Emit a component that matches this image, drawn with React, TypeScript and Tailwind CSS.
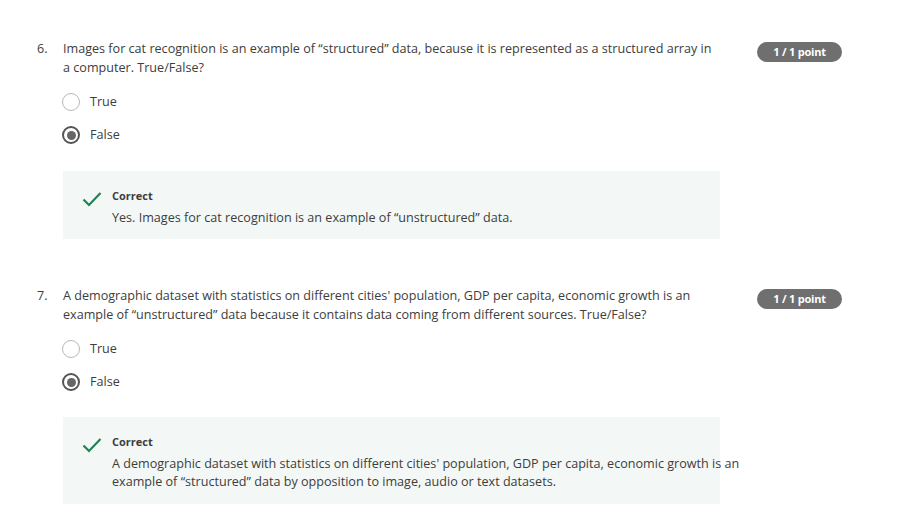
import React from "react";

const font = { fontFamily: '"Open Sans", "Noto Sans", sans-serif' };

function Badge() {
  return (
    <div className="w-[85px] h-[20px] rounded-full bg-[#6f6f6f] text-white text-[11px] font-bold flex items-center justify-center tracking-[-0.2px]">
      1 / 1 point
    </div>
  );
}

function Radio({ label, checked }: { label: string; checked?: boolean }) {
  return (
    <div className="flex items-center h-[20px] pl-[62px]">
      {checked ? (
        <div className="w-[18px] h-[18px] rounded-full border-[2px] border-[#555] flex items-center justify-center">
          <div className="w-[9px] h-[9px] rounded-full bg-[#666]" />
        </div>
      ) : (
        <div className="w-[18px] h-[18px] rounded-full border-[1.5px] border-[#b8b8b8]" />
      )}
      <span className="ml-[10px] text-[12.6px] text-[#3d3d3d]">{label}</span>
    </div>
  );
}

function Check() {
  return (
    <svg width="20" height="16" viewBox="0 0 20 16" className="mt-[1px]">
      <path d="M1.5 8.5 L7 14 L18.5 2" fill="none" stroke="#1f8354" strokeWidth="2.2" />
    </svg>
  );
}

function Feedback({ children, pb }: { children: React.ReactNode; pb: string }) {
  return (
    <div className={`ml-[63px] w-[657px] bg-[#f3f8f6] pt-[17px] ${pb} flex`}>
      <div className="w-[49px] pl-[19px] pt-[2px] shrink-0">
        <Check />
      </div>
      <div className="w-[632px] shrink-0">
        <div className="text-[11px] font-bold text-[#3d3d3d] leading-[16px]">Correct</div>
        <div className="text-[12.6px] text-[#3d3d3d] leading-[18px] mt-[5px]">{children}</div>
      </div>
    </div>
  );
}

function Question({ num, text }: { num: string; text: React.ReactNode }) {
  return (
    <div className="flex">
      <div className="w-[720px] flex pl-[37px] text-[12.6px] leading-[19px] text-[#3d3d3d]">
        <div className="w-[26px] shrink-0">{num}</div>
        <div className="flex-1 pr-[4px]">{text}</div>
      </div>
      <div className="ml-[37px] pt-[3px]">
        <Badge />
      </div>
    </div>
  );
}

export default function App() {
  return (
    <div className="w-[898px] h-[525px] bg-white overflow-hidden pt-[39px]" style={font}>
      <Question
        num="6."
        text={<>Images for cat recognition is an example of “structured” data, because it is represented as a structured array in a computer. True/False?</>}
      />
      <div className="mt-[15px]">
        <Radio label="True" />
      </div>
      <div className="mt-[13px]">
        <Radio label="False" checked />
      </div>
      <div className="mt-[26px]">
        <Feedback pb="pb-[12px]">Yes. Images for cat recognition is an example of “unstructured” data.</Feedback>
      </div>
      <div className="mt-[47px]">
        <Question
          num="7."
          text={<>A demographic dataset with statistics on different cities' population, GDP per capita, economic growth is an example of “unstructured” data because it contains data coming from different sources. True/False?</>}
        />
      </div>
      <div className="mt-[15px]">
        <Radio label="True" />
      </div>
      <div className="mt-[13px]">
        <Radio label="False" checked />
      </div>
      <div className="mt-[25px]">
        <Feedback pb="pb-[13px]">
          A demographic dataset with statistics on different cities' population, GDP per capita, economic growth is an example of “structured” data by opposition to image, audio or text datasets.
        </Feedback>
      </div>
    </div>
  );
}
